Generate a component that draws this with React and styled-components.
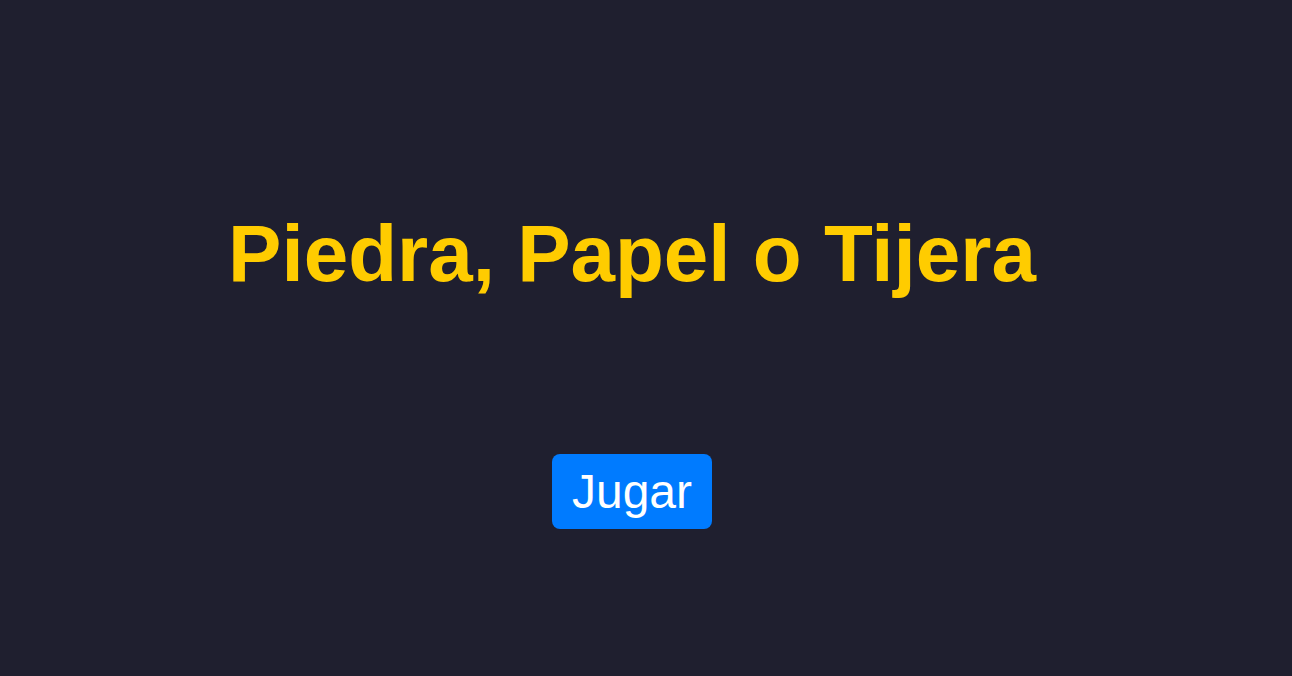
import styled, { createGlobalStyle } from 'styled-components';

const GlobalStyle = createGlobalStyle`
  html, body {
    margin: 0;
    padding: 0;
    background: #1f1f2f;
  }
  body {
    font-family: "Liberation Sans", Arial, sans-serif;
  }
`;

export default function App() {
  return (
    <>
      <GlobalStyle />
      <Screen>
        <Title>Piedra, Papel o Tijera</Title>
        <PlayButton type="button">Jugar</PlayButton>
      </Screen>
    </>
  );
}

const Screen = styled.main`
  display: flex;
  flex-direction: column;
  align-items: center;
  box-sizing: border-box;
  width: 1264px;
  height: 676px;
  padding-top: 208px;
  background: #1f1f2f;
`;

const Title = styled.h1`
  margin: 0;
  color: #ffcc00;
  font-size: 80px;
  font-weight: bold;
  line-height: 92px;
`;

const PlayButton = styled.button`
  margin-top: 154px;
  padding: 10px 20px;
  border: none;
  border-radius: 8px;
  background: #007bff;
  color: #ffffff;
  font-family: "Liberation Sans", Arial, sans-serif;
  font-size: 48px;
  line-height: 55px;
  cursor: pointer;
`;
